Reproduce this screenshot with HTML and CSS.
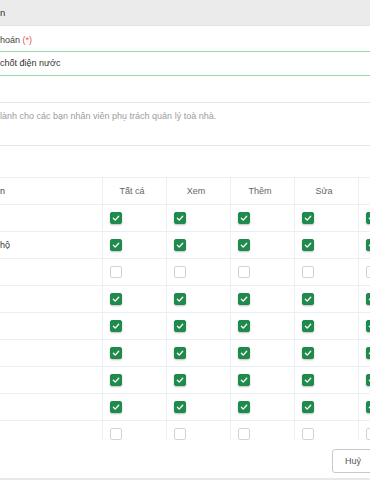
FILE: index.html
```html
<!DOCTYPE html>
<html lang="vi">
<head>
    <meta charset="UTF-8">
    <meta name="viewport" content="width=device-width, initial-scale=1.0">
    <title>Phân quyền</title>
    <link rel="stylesheet" href="styles.css">
</head>
<body>
    <div class="modal">
        <div class="modal-head">n</div>
        <div class="modal-body">
            <div class="field">
                <div class="field-label">hoán <span class="req">(*)</span></div>
                <div class="field-input">chốt điện nước</div>
            </div>
            <div class="field-area">lành cho các bạn nhân viên phụ trách quản lý toà nhà.</div>

            <div class="perm-wrap">
                <div class="perm-row perm-head">
                    <div class="cell name">n</div>
                    <div class="cell">Tất cá</div>
                    <div class="cell">Xem</div>
                    <div class="cell">Thêm</div>
                    <div class="cell">Sửa</div>
                    <div class="cell"></div>
                </div>
                <div id="rows"></div>
            </div>
        </div>
        <div class="modal-foot">
            <button class="cancel-btn">Huỷ</button>
        </div>
    </div>

    <script>
        // rows of the permission table: name + checked state
        const rows = [
            { name: '', on: true },
            { name: 'hộ', on: true },
            { name: '', on: false },
            { name: '', on: true },
            { name: '', on: true },
            { name: '', on: true },
            { name: '', on: true },
            { name: '', on: true },
            { name: '', on: false }
        ];

        const check = '<svg viewBox="0 0 12 12" width="12" height="12"><path d="M3.4 6.3l1.8 1.8 3.5-3.8" fill="none" stroke="#fff" stroke-width="1.3" stroke-linecap="round" stroke-linejoin="round"/></svg>';

        let html = '';
        rows.forEach(function (r) {
            html += '<div class="perm-row"><div class="cell name">' + r.name + '</div>';
            for (let i = 0; i < 5; i++) {
                html += '<div class="cell box"><span class="cb' + (r.on ? ' on' : '') + '">' + (r.on ? check : '') + '</span></div>';
            }
            html += '</div>';
        });
        document.getElementById('rows').innerHTML = html;
    </script>
</body>
</html>
```

FILE: styles.css
```css
body {
    margin: 0;
    width: 370px;
    height: 480px;
    overflow: hidden;
    background-color: white;
    font-family: "Liberation Sans", Arial, sans-serif;
    font-size: 9px;
    color: #3a3a3a;
}
.modal {
    height: 478px;
    border-bottom: 2px solid #e8e8e8;
    display: flex;
    flex-direction: column;
}
.modal-head {
    height: 25px;
    line-height: 25px;
    background-color: #ebebeb;
    border-bottom: 1px solid #e3e3e3;
    font-size: 9.5px;
    color: #333;
}
.modal-body {
    padding-top: 8px;
}
.field-label {
    line-height: 13px;
    margin-bottom: 4px;
    color: #444;
}
.req {
    color: #e5534b;
}
.field-input {
    height: 23px;
    line-height: 23px;
    border-top: 1px solid #90dba8;
    border-bottom: 1px solid #90dba8;
    color: #333;
}
.field-area {
    margin-top: 26px;
    height: 35px;
    padding-top: 7px;
    line-height: 13px;
    border-top: 1px solid #e6e6e6;
    border-bottom: 1px solid #e6e6e6;
    color: #9c9c9c;
}
.perm-wrap {
    margin-top: 31px;
    height: 262px;
    overflow: hidden;
    border-top: 1px solid #eceef1;
}
.perm-row {
    display: grid;
    grid-template-columns: 102px repeat(5, 64px);
    height: 26px;
    border-bottom: 1px solid #eceef1;
}
.cell {
    border-left: 1px solid #eceef1;
    display: flex;
    align-items: center;
}
.cell.name {
    border-left: none;
    color: #333;
}
.perm-head .cell {
    justify-content: center;
    padding-right: 5px;
    color: #666;
}
.perm-head .cell.name {
    justify-content: flex-start;
    padding-right: 0;
    color: #444;
}
.cell.box {
    padding-left: 7px;
}
.cb {
    width: 10px;
    height: 10px;
    border: 1px solid #d4d4d4;
    border-radius: 2px;
    background-color: white;
    display: flex;
}
.cb.on {
    background-color: #1f8a4c;
    border-color: #1f8a4c;
    box-shadow: 0 1px 2px rgba(0, 0, 0, 0.25);
}
.cb svg {
    margin: -1px;
}
.modal-foot {
    flex: 1;
    display: flex;
    justify-content: flex-end;
    align-items: flex-start;
    padding-top: 9px;
}
.cancel-btn {
    margin-right: -4px;
    height: 24px;
    padding: 0 12px;
    border: 1px solid #c8c8c8;
    border-radius: 3px;
    background-color: white;
    font-family: "Liberation Sans", Arial, sans-serif;
    font-size: 9px;
    color: #555;
}
```
